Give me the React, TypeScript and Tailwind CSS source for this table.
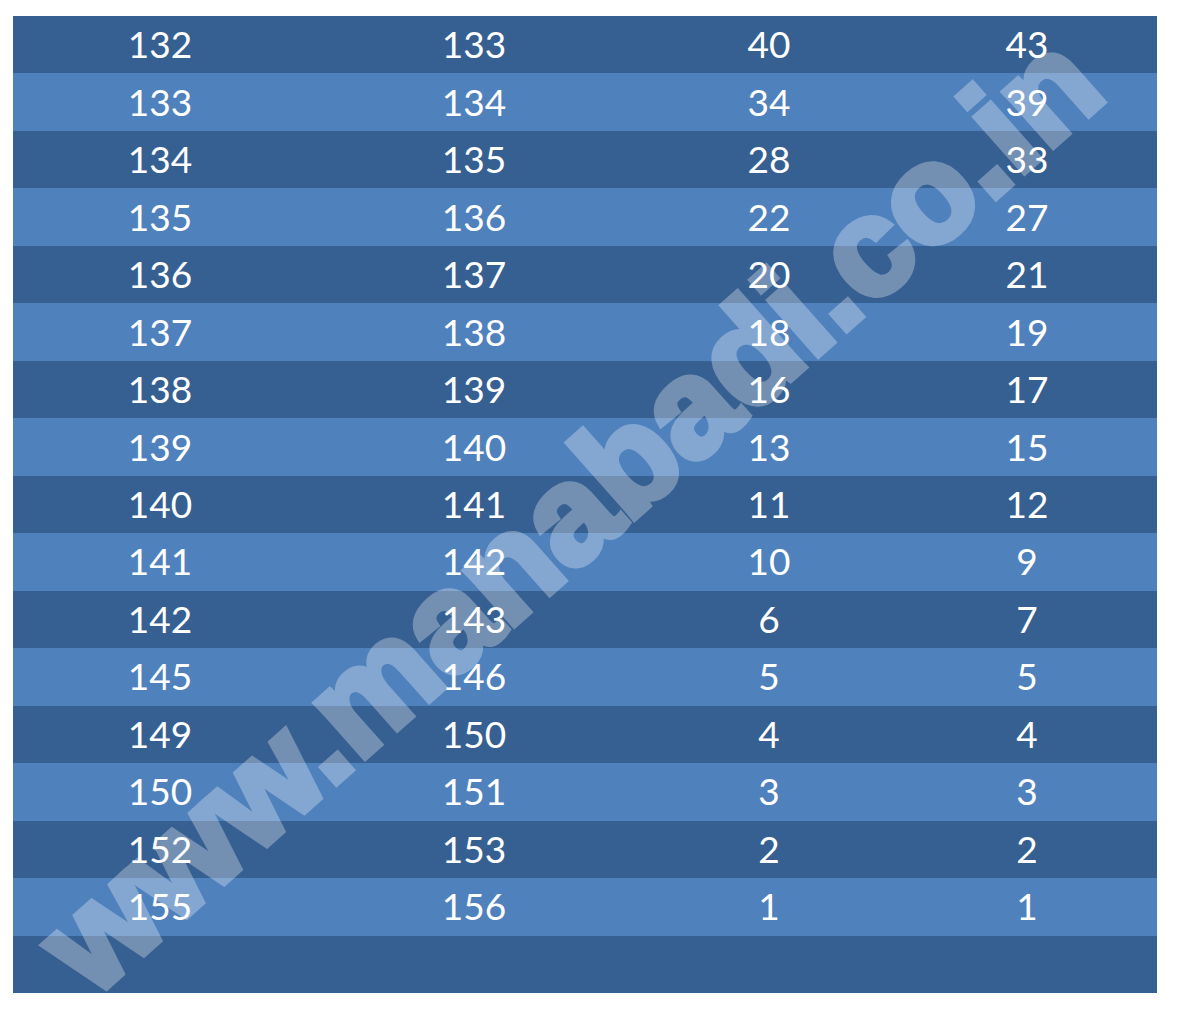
import React from "react";

const rows: string[][] = [
  ["132", "133", "40", "43"],
  ["133", "134", "34", "39"],
  ["134", "135", "28", "33"],
  ["135", "136", "22", "27"],
  ["136", "137", "20", "21"],
  ["137", "138", "18", "19"],
  ["138", "139", "16", "17"],
  ["139", "140", "13", "15"],
  ["140", "141", "11", "12"],
  ["141", "142", "10", "9"],
  ["142", "143", "6", "7"],
  ["145", "146", "5", "5"],
  ["149", "150", "4", "4"],
  ["150", "151", "3", "3"],
  ["152", "153", "2", "2"],
  ["155", "156", "1", "1"],
  ["", "", "", ""],
];

export default function App() {
  return (
    <div className="relative w-[1179px] h-[1020px] overflow-hidden bg-white">
      <div className="pt-[16px] pl-[13px]">
        <div className="flex flex-col w-[1144px] h-[977px] font-['Lato',sans-serif] text-white text-[37px]">
          {rows.map((r, i) => (
            <div
              key={i}
              className={`flex-1 grid grid-cols-[294px_334px_256px_260px] items-center ${
                i % 2 === 0 ? "bg-[#366092]" : "bg-[#4f81bd]"
              }`}
            >
              {r.map((c, j) => (
                <div key={j} className="text-center leading-none -mt-[2px]">
                  {c}
                </div>
              ))}
            </div>
          ))}
        </div>
      </div>
      <div className="absolute left-[569px] top-[512px] -translate-x-1/2 -translate-y-1/2 rotate-[-41.6deg] whitespace-nowrap leading-none font-['Liberation_Sans',Arial,sans-serif] font-bold text-[138px] text-white opacity-30 [-webkit-text-stroke:7px_white] pointer-events-none">
        www.manabadi.co.in
      </div>
    </div>
  );
}
